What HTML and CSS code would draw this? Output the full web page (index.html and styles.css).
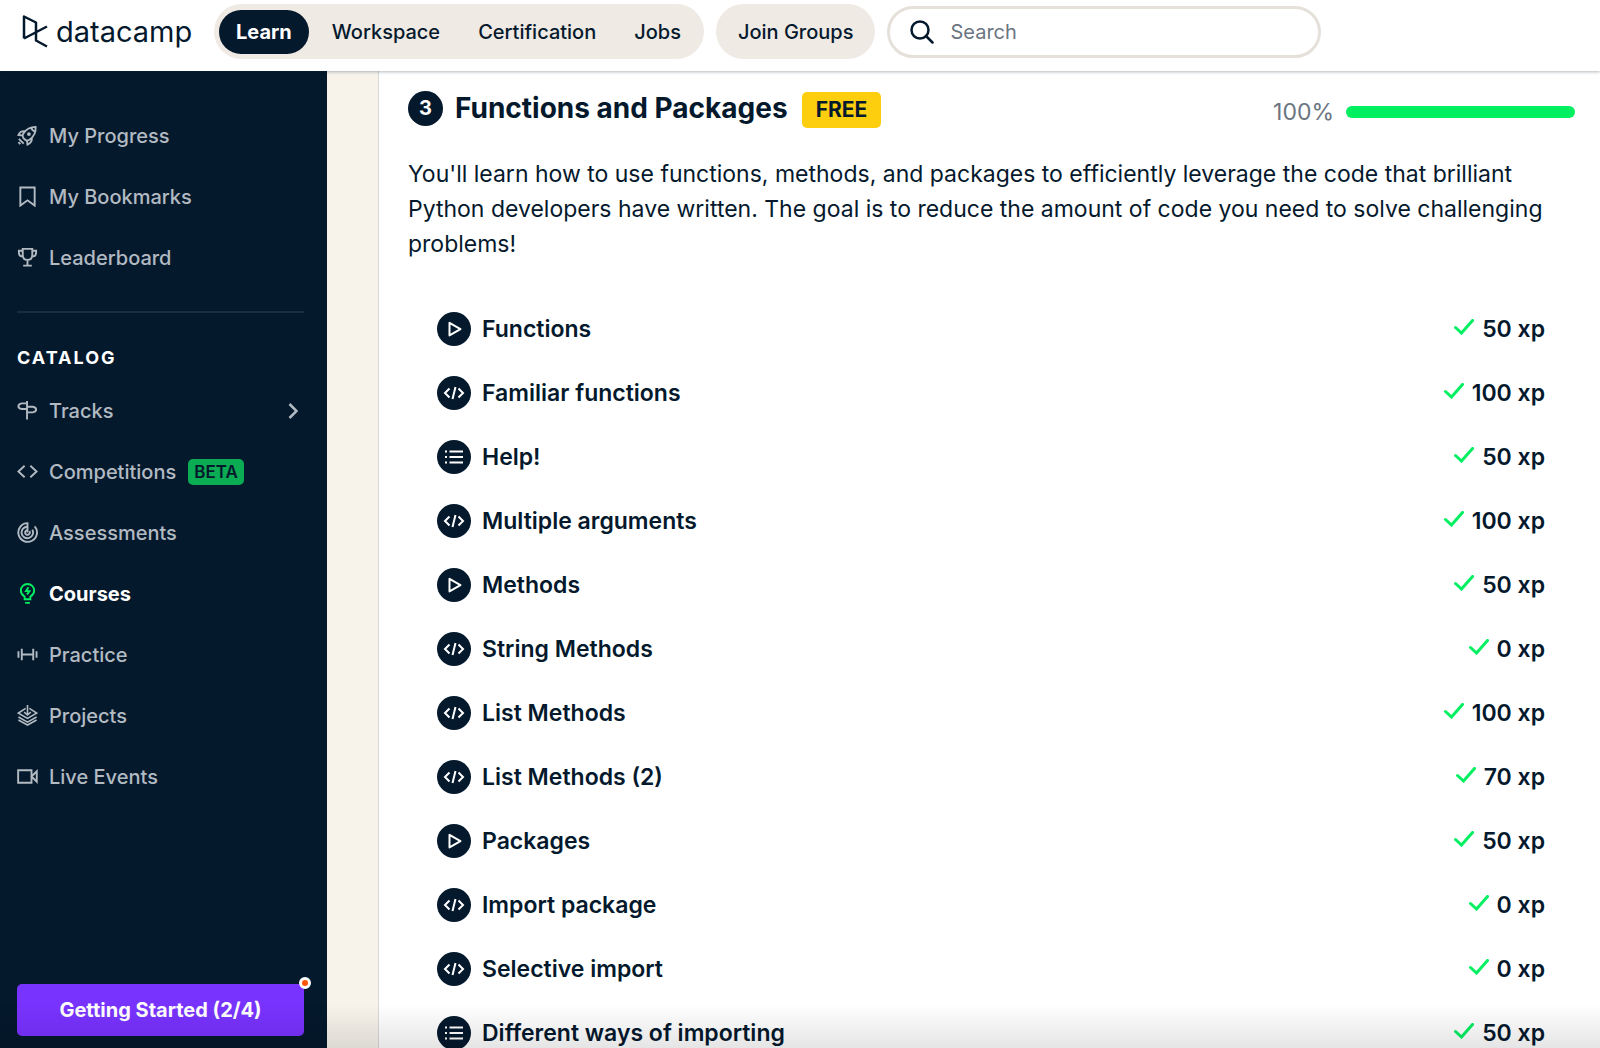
FILE: index.html
```html
<!DOCTYPE html>
<html lang="en">
<head>
<meta charset="utf-8">
<title>Functions and Packages | DataCamp</title>
<link rel="stylesheet" href="styles.css">
</head>
<body>
<svg class="sprite" aria-hidden="true">
  <symbol id="play" viewBox="0 0 34 34"><path d="M12.500 10.800v12.600l11-6.300z" stroke-linejoin="round"/></symbol>
  <symbol id="code" viewBox="0 0 34 34"><path d="M12.500 12.500 8 17l4.500 4.500M21.500 12.500 26 17l-4.500 4.500M18.500 11l-3 12"/></symbol>
  <symbol id="list" viewBox="0 0 34 34"><path d="M8 11.500h2M8 17h2M8 22.500h2M12.500 11.500H26M12.500 17H26M12.500 22.500H26"/></symbol>
  <symbol id="check" viewBox="0 0 20 16"><path d="M1.500 8.500l6 5.500L18.500 1.500"/></symbol>
</svg>

<header class="topbar">
  <a class="logo" href="#" aria-label="DataCamp">
    <svg class="logo-mark" viewBox="0 0 26 34"><path d="M2 23.500V1.500L14 7.500V25.500L25 31.500M2 23.500 25 11.500"/></svg>
    <span>datacamp</span>
  </a>
  <nav class="pill">
    <a class="active" href="#">Learn</a>
    <a href="#">Workspace</a>
    <a href="#">Certification</a>
    <a href="#">Jobs</a>
  </nav>
  <button class="join" type="button">Join Groups</button>
  <label class="search">
    <svg viewBox="0 0 24 24" aria-hidden="true"><circle cx="10" cy="10" r="8.500"/><path d="M16 16l6.500 6.500"/></svg>
    <input type="search" placeholder="Search" aria-label="Search">
  </label>
</header>

<div class="layout">
  <aside class="sidebar">
    <nav>
      <a href="#"><svg viewBox="0 0 22 22"><path d="M19.500 2C14 2 10 4 6.500 9c-1 1.500-1 2.500 0 4.500l2 2c2 1 3 1 4.500 0 5-3.500 7-7.500 6.500-13.500zM8.500 6.500C5 6 3 7 1.500 10.500L6 11M15.500 13.500C16 17 14.500 19 11 20.500L10.500 16M2 14.500l5 5M1.500 18l2 2M14.500 2.500c1 2.500 2.500 4 5 4.500"/><circle cx="12.500" cy="9.500" r="1"/></svg>My Progress</a>
      <a href="#"><svg viewBox="0 0 22 22"><path d="M3.500 20.500v-19h15v19L11 15z"/></svg>My Bookmarks</a>
      <a href="#"><svg viewBox="0 0 22 22"><path d="M6 2h10v6c0 3.500-2 5.500-5 5.500S6 11.500 6 8zM6 4H2v2c0 2.500 1.500 4 4.500 4M16 4h4v2c0 2.500-1.500 4-4.500 4M11 13.500V19M6.500 19.500h9"/></svg>Leaderboard</a>
    </nav>
    <hr>
    <h2>CATALOG</h2>
    <nav>
      <a href="#"><svg viewBox="0 0 22 22"><path d="M10.500 1v19.500M10.500 3.500H5Q1.500 4 1.500 6.500T5 9.500h5.500M10.500 7h6q3.500.5 3.500 3t-3.500 3h-6"/></svg>Tracks<svg class="chevron" viewBox="0 0 10 16"><path d="M1.500 1l7 7-7 7"/></svg></a>
      <a href="#"><svg viewBox="0 0 22 22"><path d="M8 5l-6.500 6L8 17M14 5l6.500 6-6.500 6"/></svg>Competitions<span class="beta">BETA</span></a>
      <a href="#"><svg viewBox="0 0 22 22"><path d="M11 11V1.200A9.800 9.800 0 1 0 18.500 4.500M11 5a6 6 0 1 0 5 3M11 8.500a2.500 2.500 0 1 0 2 1"/></svg>Assessments</a>
      <a class="current" href="#"><svg viewBox="0 0 22 22"><path d="M8 17v-2.500C5.500 12.500 4 11 4 8a7 7 0 0 1 14 0c0 3-1.500 4.500-4 6.500V17zM8.500 20.800h5M12 4.500L9.500 8.500h3.500L10.500 12"/></svg>Courses</a>
      <a href="#"><svg viewBox="0 0 22 22"><path d="M5 5v12M17 5v12M5 11h12M1.500 7.500v7M20.500 7.500v7"/></svg>Practice</a>
      <a href="#"><svg viewBox="0 0 22 22"><path d="M9 3.500 1.500 8.500 11 14l9.500-5.500L13 3.500M1.500 12.500 11 18l9.500-5.500M1.500 15.800 11 21l9.500-5.200M11 0v10M7.500 7.500 11 10.500l3.500-3" stroke-width="1.700"/></svg>Projects</a>
      <a href="#"><svg viewBox="0 0 22 22"><path d="M1.200 4.500h14v13h-14zM15.200 11l5.500-5.500v11z"/></svg>Live Events</a>
    </nav>
    <button class="start" type="button">Getting Started (2/4)</button>
  </aside>

  <main class="page">
    <section class="chapter">
      <div class="chapter-head">
        <span class="number">3</span>
        <h1>Functions and Packages</h1>
        <span class="free">FREE</span>
        <div class="completion">
          <label for="done">100%</label>
          <progress id="done" value="100" max="100"></progress>
        </div>
      </div>
      <p>You'll learn how to use functions, methods, and packages to efficiently leverage the code that brilliant Python developers have written. The goal is to reduce the amount of code you need to solve challenging problems!</p>
      <ul class="lessons">
        <li><svg class="kind"><use href="#play"/></svg><a href="#">Functions</a><svg class="tick"><use href="#check"/></svg><span>50 xp</span></li>
        <li><svg class="kind"><use href="#code"/></svg><a href="#">Familiar functions</a><svg class="tick"><use href="#check"/></svg><span>100 xp</span></li>
        <li><svg class="kind"><use href="#list"/></svg><a href="#">Help!</a><svg class="tick"><use href="#check"/></svg><span>50 xp</span></li>
        <li><svg class="kind"><use href="#code"/></svg><a href="#">Multiple arguments</a><svg class="tick"><use href="#check"/></svg><span>100 xp</span></li>
        <li><svg class="kind"><use href="#play"/></svg><a href="#">Methods</a><svg class="tick"><use href="#check"/></svg><span>50 xp</span></li>
        <li><svg class="kind"><use href="#code"/></svg><a href="#">String Methods</a><svg class="tick"><use href="#check"/></svg><span>0 xp</span></li>
        <li><svg class="kind"><use href="#code"/></svg><a href="#">List Methods</a><svg class="tick"><use href="#check"/></svg><span>100 xp</span></li>
        <li><svg class="kind"><use href="#code"/></svg><a href="#">List Methods (2)</a><svg class="tick"><use href="#check"/></svg><span>70 xp</span></li>
        <li><svg class="kind"><use href="#play"/></svg><a href="#">Packages</a><svg class="tick"><use href="#check"/></svg><span>50 xp</span></li>
        <li><svg class="kind"><use href="#code"/></svg><a href="#">Import package</a><svg class="tick"><use href="#check"/></svg><span>0 xp</span></li>
        <li><svg class="kind"><use href="#code"/></svg><a href="#">Selective import</a><svg class="tick"><use href="#check"/></svg><span>0 xp</span></li>
        <li><svg class="kind"><use href="#list"/></svg><a href="#">Different ways of importing</a><svg class="tick"><use href="#check"/></svg><span>50 xp</span></li>
      </ul>
    </section>
  </main>
</div>
</body>
</html>
```
FILE: styles.css
```css
:root {
  --navy: #05192d;
  --green: #03ef62;
  --sand: #efeae4;
}

*, *::after { box-sizing: border-box; }

body {
  margin: 0;
  height: 100vh;
  display: flex;
  flex-direction: column;
  overflow: hidden;
  font-family: Inter, "Liberation Sans", sans-serif;
  font-size: 20px;
  color: var(--navy);
  background: #fff;
}

/* soft shade along the bottom edge of the window */
body::after {
  content: "";
  position: fixed;
  inset: auto 0 0;
  height: 44px;
  background: linear-gradient(rgba(0, 0, 0, 0), rgba(0, 0, 0, 0.1));
  pointer-events: none;
}

a { color: inherit; text-decoration: none; }
button, input { font: inherit; color: inherit; }
svg { fill: none; stroke: currentColor; stroke-width: 2; flex: none; }
.sprite { display: none; }

/* top bar */
.topbar {
  position: relative;
  z-index: 1;
  flex: none;
  display: flex;
  align-items: center;
  height: 71px;
  padding: 0 24px 8px 22px;
  background: #fff;
  box-shadow: 0 1px 3px rgba(5, 25, 45, 0.3);
}

.logo {
  display: flex;
  align-items: center;
  gap: 8px;
  width: 192px;
  font-size: 29px;
}
.logo-mark { width: 26px; height: 34px; stroke-width: 2.5; stroke-linejoin: round; }

.pill {
  display: flex;
  align-items: center;
  height: 55px;
  padding: 0 4px 0 5px;
  border-radius: 28px;
  background: var(--sand);
  font-weight: 500;
}
.pill a { padding: 0 19px; line-height: 44px; }
.pill .active {
  margin-right: 4px;
  padding: 0 17px;
  border-radius: 22px;
  background: var(--navy);
  color: #fff;
  font-weight: 700;
}

.join {
  height: 55px;
  margin-left: 12px;
  padding: 0 22px;
  border: 0;
  border-radius: 28px;
  background: var(--sand);
  font-weight: 500;
}

.search {
  display: flex;
  align-items: center;
  gap: 16px;
  flex: 0 1 434px;
  height: 52px;
  margin-left: 12px;
  padding: 0 20px;
  border: 3px solid #e5e1da;
  border-radius: 26px;
}
.search svg { width: 24px; height: 24px; stroke-width: 2.5; stroke-linecap: round; }
.search input {
  flex: 1;
  min-width: 0;
  padding: 0;
  border: 0;
  outline: 0;
  background: none;
}
.search input::placeholder { color: #6a7581; }

/* layout */
.layout { flex: 1; min-height: 0; display: flex; }

.sidebar {
  flex: none;
  display: flex;
  flex-direction: column;
  width: 327px;
  padding: 34px 23px 12px 17px;
  background: var(--navy);
  color: #b2bac2;
  font-weight: 500;
}
.sidebar nav a { display: flex; align-items: center; height: 61px; }
.sidebar nav svg { width: 21px; height: 21px; margin-right: 11px; }
.sidebar nav .chevron { width: 10px; height: 16px; margin: 0 6px 0 auto; stroke-width: 2.5; }
.sidebar nav .current { color: #fff; font-weight: 700; }
.sidebar .current svg { color: var(--green); }
.sidebar hr {
  width: 100%;
  height: 2px;
  margin: 23px 0 33px;
  border: 0;
  background: #1a2d40;
}
.sidebar h2 {
  margin: 0 0 10px;
  font-size: 18px;
  line-height: 24px;
  letter-spacing: 2px;
  color: #fff;
}
.beta {
  margin-left: 12px;
  padding: 0 6px;
  border-radius: 5px;
  background: #0bac53;
  color: var(--navy);
  font-size: 17px;
  font-weight: 600;
  line-height: 26px;
}
.start {
  position: relative;
  height: 52px;
  margin-top: auto;
  border: 0;
  border-radius: 5px;
  background: #7933ff;
  color: #fff;
  font-weight: 700;
}
.start::after {
  content: "";
  position: absolute;
  top: -7px;
  right: -7px;
  width: 12px;
  height: 12px;
  border: 3px solid #fff;
  border-radius: 50%;
  background: #ff5400;
}

.page { flex: 1; min-width: 0; padding-left: 51px; background: #f7f3eb; }
.chapter {
  min-height: 100%;
  padding: 12px 25px 0 29px;
  border-left: 1px solid #d9d9d9;
  background: #fff;
}

.chapter-head { display: flex; align-items: center; height: 50px; }
.number {
  width: 35px;
  margin-right: 12px;
  border-radius: 50%;
  background: var(--navy);
  color: #fff;
  font-weight: 700;
  line-height: 35px;
  text-align: center;
}
h1 { margin: 0; font-size: 28px; line-height: 36px; }
.free {
  margin: 4px 0 0 14px;
  padding: 0 14px;
  border-radius: 5px;
  background: #fcce0d;
  font-size: 21px;
  font-weight: 700;
  line-height: 36px;
}
.completion {
  display: flex;
  align-items: center;
  gap: 12px;
  margin: 8px 0 0 auto;
  font-size: 23px;
  color: #6a7581;
}
progress {
  appearance: none;
  width: 229px;
  height: 12px;
  border: 0;
}
progress::-webkit-progress-bar { border-radius: 6px; background: #e5e1da; }
progress::-webkit-progress-value { border-radius: 6px; background: var(--green); }

.chapter p { margin: 24px 0 35px; font-size: 23px; line-height: 35px; }

.lessons { margin: 0; padding: 0 30px 0 29px; list-style: none; }
.lessons li {
  display: flex;
  align-items: center;
  height: 64px;
  font-size: 23px;
  font-weight: 600;
}
.kind {
  width: 34px;
  height: 34px;
  margin-right: 11px;
  border-radius: 50%;
  background: var(--navy);
  color: #fff;
}
.tick {
  width: 20px;
  height: 16px;
  margin: 0 8px 4px auto;
  color: var(--green);
  stroke-width: 3;
  stroke-linecap: round;
}
```
